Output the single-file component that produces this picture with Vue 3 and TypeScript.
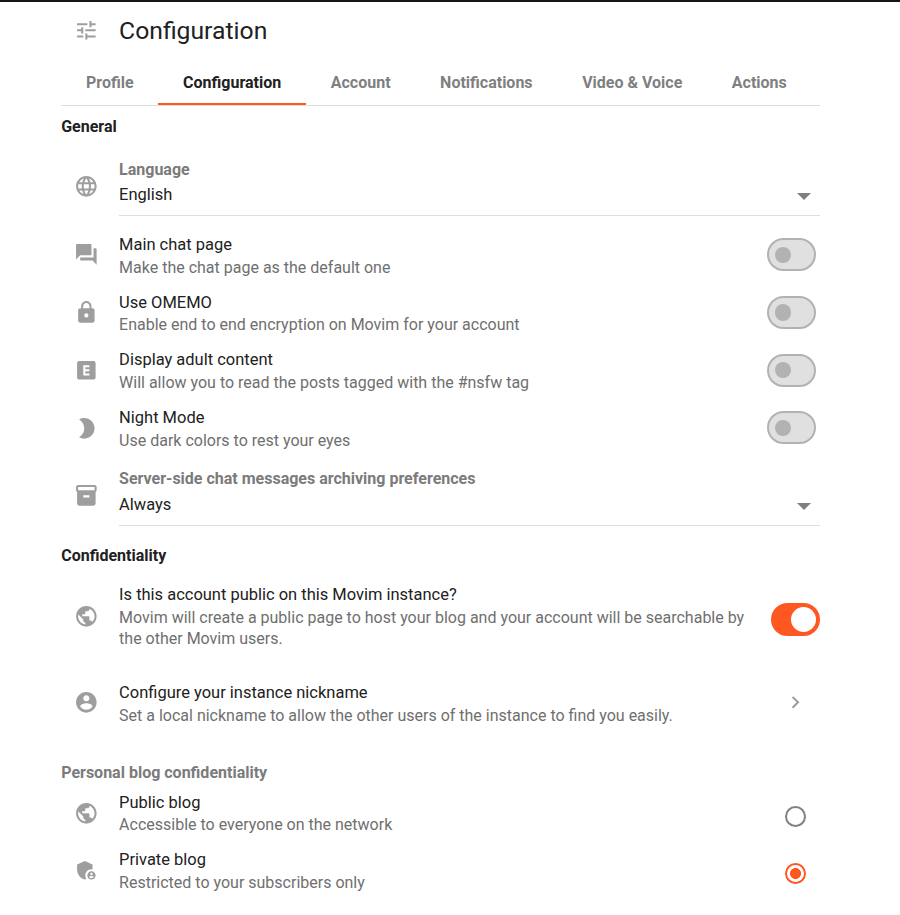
<script setup lang="ts">
import { ref } from 'vue'

interface SwitchRow {
  icon: string
  title: string
  text: string
}

const icons: Record<string, string> = {
  tune: 'M3 17v2h6v-2H3zM3 5v2h10V5H3zm10 16v-2h8v-2h-8v-2h-2v6h2zM7 9v2H3v2h4v2h2V9H7zm14 4v-2H11v2h10zm-6-4h2V7h4V5h-4V3h-2v6z',
  language:
    'M11.99 2C6.47 2 2 6.48 2 12s4.47 10 9.99 10C17.52 22 22 17.52 22 12S17.52 2 11.99 2zm6.93 6h-2.95c-.32-1.25-.78-2.45-1.38-3.56 1.84.63 3.37 1.91 4.33 3.56zM12 4.04c.83 1.2 1.48 2.53 1.91 3.96h-3.82c.43-1.43 1.08-2.76 1.91-3.96zM4.26 14C4.1 13.36 4 12.69 4 12s.1-1.36.26-2h3.38c-.08.66-.14 1.32-.14 2s.06 1.34.14 2H4.26zm.82 2h2.95c.32 1.25.78 2.45 1.38 3.56-1.84-.63-3.37-1.9-4.33-3.56zm2.95-8H5.08c.96-1.66 2.49-2.93 4.33-3.56C8.81 5.55 8.35 6.75 8.03 8zM12 19.96c-.83-1.2-1.48-2.53-1.91-3.96h3.82c-.43 1.43-1.08 2.76-1.91 3.96zM14.34 14H9.66c-.09-.66-.16-1.32-.16-2s.07-1.35.16-2h4.68c.09.65.16 1.32.16 2s-.07 1.34-.16 2zm.25 5.56c.6-1.11 1.06-2.31 1.38-3.56h2.95c-.96 1.65-2.49 2.93-4.33 3.56zM16.36 14c.08-.66.14-1.32.14-2s-.06-1.34-.14-2h3.38c.16.64.26 1.31.26 2s-.1 1.36-.26 2h-3.38z',
  forum:
    'M21 6h-2v9H6v2c0 .55.45 1 1 1h11l4 4V7c0-.55-.45-1-1-1zm-4 6V3c0-.55-.45-1-1-1H3c-.55 0-1 .45-1 1v14l4-4h10c.55 0 1-.45 1-1z',
  lock: 'M18 8h-1V6c0-2.76-2.24-5-5-5S7 3.24 7 6v2H6c-1.1 0-2 .9-2 2v10c0 1.1.9 2 2 2h12c1.1 0 2-.9 2-2V10c0-1.1-.9-2-2-2zm-6 9c-1.1 0-2-.9-2-2s.9-2 2-2 2 .9 2 2-.9 2-2 2zm3.1-9H8.9V6c0-1.71 1.39-3.1 3.1-3.1 1.71 0 3.1 1.39 3.1 3.1v2z',
  explicit:
    'M19 3H5c-1.1 0-2 .9-2 2v14c0 1.1.9 2 2 2h14c1.1 0 2-.9 2-2V5c0-1.1-.9-2-2-2zm-4 6h-4v2h4v2h-4v2h4v2H9V7h6v2z',
  night: 'M10 2c-1.82 0-3.53.5-5 1.35C7.99 5.08 10 8.3 10 12s-2.01 6.92-5 8.65C6.47 21.5 8.18 22 10 22c5.52 0 10-4.48 10-10S15.52 2 10 2z',
  archive: 'M20 2H4c-1 0-2 .9-2 2v3.01c0 .72.43 1.34 1 1.69V20c0 1.1 1.1 2 2 2h14c.9 0 2-.9 2-2V8.7c.57-.35 1-.97 1-1.69V4c0-1.1-1-2-2-2zm-5 12H9v-2h6v2zm5-7H4V4h16v3z',
  public:
    'M12 2C6.48 2 2 6.48 2 12s4.48 10 10 10 10-4.48 10-10S17.52 2 12 2zm-1 17.93c-3.95-.49-7-3.85-7-7.93 0-.62.08-1.21.21-1.79L9 15v1c0 1.1.9 2 2 2v1.93zm6.9-2.54c-.26-.81-1-1.39-1.9-1.39h-1v-3c0-.55-.45-1-1-1H8v-2h2c.55 0 1-.45 1-1V7h2c1.1 0 2-.9 2-2v-.41c2.93 1.19 5 4.06 5 7.41 0 2.08-.8 3.97-2.1 5.39z',
  account:
    'M12 2C6.48 2 2 6.48 2 12s4.48 10 10 10 10-4.48 10-10S17.52 2 12 2zm0 3c1.66 0 3 1.34 3 3s-1.34 3-3 3-3-1.34-3-3 1.34-3 3-3zm0 14.2c-2.5 0-4.71-1.28-6-3.22.03-1.99 4-3.08 6-3.08 1.99 0 5.97 1.09 6 3.08-1.29 1.94-3.5 3.22-6 3.22z',
  shield:
    'M17 11c.34 0 .67.04 1 .09V6.27L10.5 3 3 6.27v4.91c0 4.54 3.2 8.79 7.5 9.82.55-.13 1.08-.32 1.6-.55-.69-.98-1.1-2.17-1.1-3.45 0-3.31 2.69-6 6-6zM17 13c-2.21 0-4 1.79-4 4s1.79 4 4 4 4-1.79 4-4-1.79-4-4-4zm0 1.38c.62 0 1.12.51 1.12 1.12s-.51 1.12-1.12 1.12-1.12-.51-1.12-1.12.5-1.12 1.12-1.12zm0 5.37c-.93 0-1.74-.46-2.24-1.17.05-.72 1.51-1.08 2.24-1.08s2.19.36 2.24 1.08c-.5.71-1.31 1.17-2.24 1.17z',
  chevron: 'M10 6L8.59 7.41 13.17 12l-4.58 4.59L10 18l6-6z',
}

const tabs = ['Profile', 'Configuration', 'Account', 'Notifications', 'Video & Voice', 'Actions']
const activeTab = ref('Configuration')

const switches: SwitchRow[] = [
  { icon: 'forum', title: 'Main chat page', text: 'Make the chat page as the default one' },
  { icon: 'lock', title: 'Use OMEMO', text: 'Enable end to end encryption on Movim for your account' },
  { icon: 'explicit', title: 'Display adult content', text: 'Will allow you to read the posts tagged with the #nsfw tag' },
  { icon: 'night', title: 'Night Mode', text: 'Use dark colors to rest your eyes' },
]
const enabled = ref<string[]>([])
const isPublic = ref(true)

const blogModes = [
  { icon: 'public', title: 'Public blog', text: 'Accessible to everyone on the network' },
  { icon: 'shield', title: 'Private blog', text: 'Restricted to your subscribers only' },
]
const blogMode = ref('Private blog')

function toggle(name: string) {
  enabled.value = enabled.value.includes(name)
    ? enabled.value.filter((n) => n !== name)
    : [...enabled.value, name]
}
</script>

<template>
  <main class="page">
    <header class="header">
      <span class="lead"><svg class="icon" viewBox="0 0 24 24"><path :d="icons.tune" /></svg></span>
      <h1>Configuration</h1>
    </header>

    <nav class="tabs">
      <a v-for="t in tabs" :key="t" class="tab" :class="{ active: t === activeTab }" @click="activeTab = t">{{ t }}</a>
    </nav>

    <h2 class="heading general">General</h2>

    <div class="row select language">
      <span class="lead"><svg class="icon" viewBox="0 0 24 24"><path :d="icons.language" /></svg></span>
      <div class="field">
        <span class="label">Language</span>
        <span class="value">English<svg class="caret" viewBox="0 0 14 7"><path d="M0 0h14L7 7z" /></svg></span>
      </div>
    </div>

    <div v-for="s in switches" :key="s.title" class="row option">
      <span class="lead"><svg class="icon" viewBox="0 0 24 24"><path :d="icons[s.icon]" /></svg></span>
      <div class="body">
        <p class="title">{{ s.title }}</p>
        <p class="text">{{ s.text }}</p>
      </div>
      <span class="switch" :class="{ on: enabled.includes(s.title) }" @click="toggle(s.title)"><i class="knob"></i></span>
    </div>

    <div class="row select archive">
      <span class="lead"><svg class="icon" viewBox="0 0 24 24"><path :d="icons.archive" /></svg></span>
      <div class="field">
        <span class="label">Server-side chat messages archiving preferences</span>
        <span class="value">Always<svg class="caret" viewBox="0 0 14 7"><path d="M0 0h14L7 7z" /></svg></span>
      </div>
    </div>

    <h2 class="heading confidentiality">Confidentiality</h2>

    <div class="row account">
      <span class="lead"><svg class="icon" viewBox="0 0 24 24"><path :d="icons.public" /></svg></span>
      <div class="body">
        <p class="title">Is this account public on this Movim instance?</p>
        <p class="text">Movim will create a public page to host your blog and your account will be searchable by the other Movim users.</p>
      </div>
      <span class="switch" :class="{ on: isPublic }" @click="isPublic = !isPublic"><i class="knob"></i></span>
    </div>

    <div class="row nickname">
      <span class="lead"><svg class="icon" viewBox="0 0 24 24"><path :d="icons.account" /></svg></span>
      <div class="body">
        <p class="title">Configure your instance nickname</p>
        <p class="text">Set a local nickname to allow the other users of the instance to find you easily.</p>
      </div>
      <span class="action"><svg class="icon" viewBox="0 0 24 24"><path :d="icons.chevron" /></svg></span>
    </div>

    <h2 class="heading blog">Personal blog confidentiality</h2>

    <div v-for="b in blogModes" :key="b.title" class="row option blog-mode" @click="blogMode = b.title">
      <span class="lead"><svg class="icon" viewBox="0 0 24 24"><path :d="icons[b.icon]" /></svg></span>
      <div class="body">
        <p class="title">{{ b.title }}</p>
        <p class="text">{{ b.text }}</p>
      </div>
      <span class="action"><span class="radio" :class="{ checked: b.title === blogMode }"></span></span>
    </div>
  </main>
</template>

<style>
body {
  background: #fff;
  overflow: hidden;
}
</style>

<style scoped>
.page {
  box-sizing: border-box;
  height: 915px;
  padding: 0 80px 0 61.2px;
  border-top: 2px solid #15151a;
  overflow: hidden;
  font-family: Roboto, sans-serif;
  font-size: 16.48px;
  color: #212121;
}
h1,
h2,
p {
  margin: 0;
  font-weight: 400;
}
.lead {
  display: flex;
  justify-content: center;
  flex: 0 0 57.9px;
  box-sizing: border-box;
  padding-right: 8.2px;
}
.icon {
  display: block;
  width: 24.7px;
  height: 24.7px;
  fill: #9e9e9e;
}
.header {
  display: flex;
  align-items: center;
  height: 57.6px;
}
.header h1 {
  font-size: 24.72px;
  line-height: 30px;
}
.tabs {
  display: flex;
  box-sizing: border-box;
  height: 46.4px;
  border-bottom: 1px solid #dedede;
}
.tab {
  box-sizing: border-box;
  padding: 0 24.77px;
  border-bottom: 2px solid transparent;
  font-size: 16px;
  font-weight: 700;
  line-height: 45px;
  white-space: nowrap;
  color: #7f7f7f;
}
.tab.active {
  color: #212121;
  border-color: #ff5722;
}
.heading {
  display: flex;
  align-items: center;
  box-sizing: border-box;
  font-size: 16px;
  font-weight: 700;
}
.general {
  height: 41px;
}
.row {
  display: flex;
  align-items: center;
}
.field {
  flex: 1;
  display: flex;
  flex-direction: column;
  margin-top: 2px;
  border-bottom: 1px solid #dedede;
}
.label {
  font-size: 16px;
  font-weight: 700;
  line-height: 22px;
  color: #7b7b7b;
}
.value {
  display: flex;
  justify-content: space-between;
  align-items: center;
  padding: 4px 9px 10px 0;
  line-height: 21px;
}
.caret {
  width: 14px;
  height: 7px;
  margin-top: 4px;
  fill: #7f7f7f;
}
.language {
  height: 78px;
  margin-bottom: 1px;
}
.language .field {
  margin-top: 3px;
}
.language .value {
  padding-top: 3px;
}
.option {
  height: 57.7px;
}
.body {
  flex: 1;
  padding-top: 1.2px;
}
.title {
  line-height: 23px;
}
.text {
  margin-top: 0.6px;
  font-size: 16px;
  line-height: 21.2px;
  color: #6f6f6f;
}
.switch {
  display: flex;
  align-items: center;
  flex: none;
  box-sizing: border-box;
  width: 49px;
  height: 33px;
  margin-right: 4px;
  padding-left: 6px;
  border: 2px solid #b2b2b2;
  border-radius: 17px;
  background: #e0e0e0;
}
.knob {
  width: 16.3px;
  height: 16.5px;
  border-radius: 50%;
  background: #b2b2b2;
}
.switch.on {
  padding-left: 18px;
  border-color: #ff5722;
  background: #ff5722;
}
.switch.on .knob {
  width: 25px;
  height: 25px;
  background: #fff;
}
.archive {
  height: 78px;
}
.confidentiality {
  height: 42px;
}
.account {
  height: 80px;
}
.account .body {
  padding: 0 16px 0.8px 0;
}
.account .text {
  margin-top: 1.2px;
}
.account .switch {
  margin: 6px 0 0;
}
.nickname {
  height: 92px;
}
.action {
  display: flex;
  justify-content: center;
  width: 49px;
}
.blog {
  height: 35.5px;
  padding-top: 12.5px;
  color: #7b7b7b;
}
.blog-mode .body {
  padding-top: 0.2px;
}
.blog-mode .action {
  margin-top: 6.2px;
}
.radio {
  box-sizing: border-box;
  width: 21px;
  height: 21px;
  border: 2px solid #808080;
  border-radius: 50%;
}
.radio.checked {
  border-color: #ff5722;
  background: radial-gradient(circle, #ff5722 5.2px, #fff 5.8px);
}
</style>
